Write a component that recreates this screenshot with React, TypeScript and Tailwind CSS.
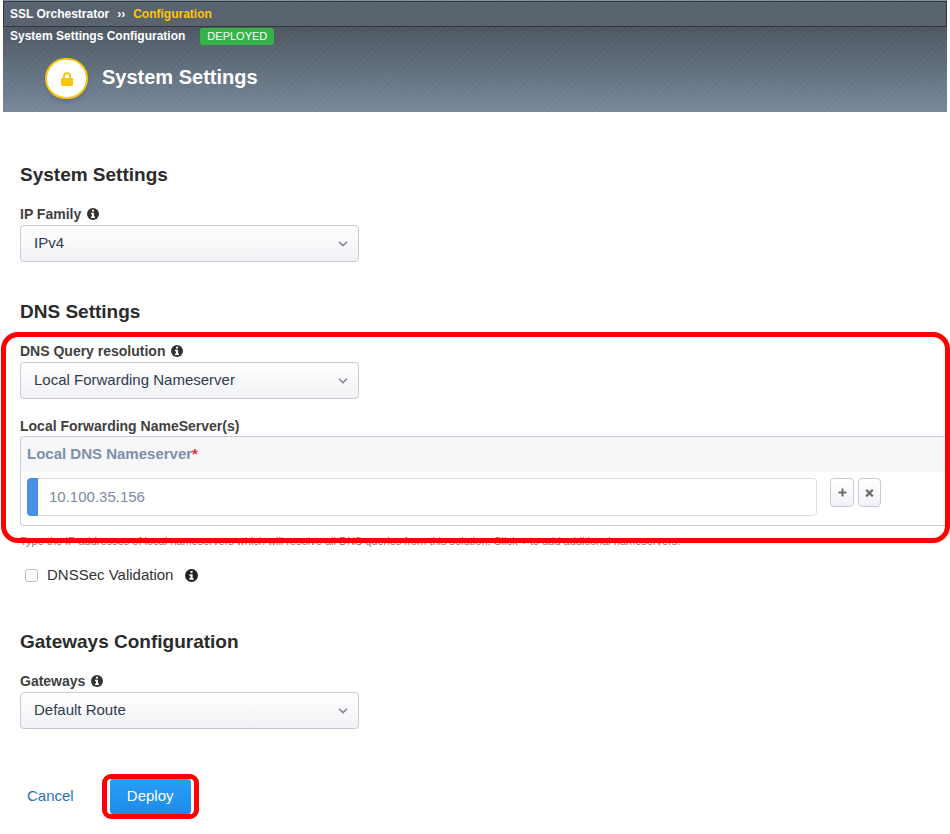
import type { ReactNode } from "react";

function Info({ label, className }: { label: string; className: string }) {
  return (
    <svg viewBox="0 0 24 24" role="img" aria-label={label} className={className}>
      <circle cx="12" cy="12" r="12" fill="currentColor" />
      <path d="M10 3.5h4v3.5h-4zM8 9.5h6v7.5h2v3H8v-3h2v-4.500H8z" fill="#fff" />
    </svg>
  );
}

function Heading({ children }: { children: ReactNode }) {
  return <h2 className="text-[19px] leading-6 font-bold text-[#2b2b2b]">{children}</h2>;
}

function SelectField({ id, label, options }: { id: string; label: string; options: string[] }) {
  return (
    <div>
      <div className="flex h-5 items-center gap-[6px]">
        <label htmlFor={id} className="text-[14px] leading-5 font-bold text-[#3f3f3f]">
          {label}
        </label>
        <Info label={"About " + label} className="size-3 text-[#333]" />
      </div>
      <div className="relative mt-px w-[339px] max-w-full">
        <select
          id={id}
          className="block h-[37px] w-full appearance-none rounded border border-[#c9cad9] bg-linear-to-b from-white to-[#f1f2f5] pr-8 pl-[13px] text-[15px] text-[#2f3b50]"
        >
          {options.map((option) => (
            <option key={option}>{option}</option>
          ))}
        </select>
        <svg
          viewBox="0 0 10 6"
          aria-hidden="true"
          className="pointer-events-none absolute top-4 right-[11px] h-[6px] w-[10px]"
        >
          <path d="M1 0.8 L5 4.6 L9 0.8" fill="none" stroke="#828794" strokeWidth="1.5" />
        </svg>
      </div>
    </div>
  );
}

function Header() {
  return (
    <header className="mx-[3px] h-28 border-t border-[#7c90a3] bg-linear-to-b from-[#4a545e] from-20% to-[#77889b] text-white">
      <div className="h-full bg-[repeating-linear-gradient(135deg,#ffffff07_0px,#ffffff07_2px,transparent_2px,transparent_4px)]">
        <nav
          aria-label="Breadcrumb"
          className="flex h-[26px] items-center gap-2 border border-[#34383a] bg-[#5b6773]/80 px-[6px] text-[12px] font-bold"
        >
          <a href="#orchestrator">SSL Orchestrator</a>
          <span>››</span>
          <a href="#configuration" className="text-[#ffc60a]">
            Configuration
          </a>
        </nav>
        <div className="flex h-[18px] items-center gap-[15px] px-[7px]">
          <span className="text-[12px] leading-4 font-bold">System Settings Configuration</span>
          <span className="rounded-[3px] bg-[#36b24a] px-[7px] text-[11px] leading-[17px]">DEPLOYED</span>
        </div>
        <div className="mt-[13px] flex items-center gap-[14px] pl-[42px]">
          <span className="flex h-[41px] w-[43px] items-center justify-center rounded-full border-2 border-[#fbc50c] bg-white shadow-md">
            <svg viewBox="0 0 12 14" aria-hidden="true" className="h-[14px] w-3">
              <path d="M3 7V4.200a3 3 0 0 1 6 0V7" fill="none" stroke="#fbc50c" strokeWidth="2" />
              <rect y="6" width="12" height="8" rx="1" fill="#fbc50c" />
            </svg>
          </span>
          <h1 className="pb-1 text-[20px] leading-6 font-bold">System Settings</h1>
        </div>
      </div>
    </header>
  );
}

const smallButton =
  "flex h-[29px] items-center justify-center rounded border border-[#c9cad9] bg-linear-to-b from-white to-[#f1f2f5] text-[#6b6b6b]";

function NameserverTable() {
  return (
    <div className="mr-1 rounded-l border border-r-0 border-[#c9cad9] pb-[3px]">
      <table className="w-full table-fixed border-separate border-spacing-0">
        <colgroup>
          <col />
          <col className="w-[122px]" />
        </colgroup>
        <thead>
          <tr className="h-[35px]">
            <th className="rounded bg-[#f6f7f9] px-[6px] text-left text-[15px] font-bold text-[#7d8fa9]">
              Local DNS Nameserver<span className="text-[#f0262b]">*</span>
            </th>
            <th aria-label="Actions" className="rounded bg-[#f6f7f9]" />
          </tr>
        </thead>
        <tbody>
          <tr>
            <td className="py-[6px] pr-[7px] pl-[6px]">
              <div className="flex h-[38px] overflow-hidden rounded">
                <span className="w-[11px] shrink-0 bg-[#4a90e2]" />
                <input
                  aria-label="Local DNS Nameserver"
                  defaultValue="10.100.35.156"
                  className="min-w-0 flex-1 rounded-r border border-l-0 border-[#dcdde8] bg-white px-[11px] text-[15px] text-[#7b8aa1]"
                />
              </div>
            </td>
            <td className="py-[6px] pl-[6px] align-top">
              <div className="flex gap-1">
                <button type="button" aria-label="Add nameserver" className={smallButton + " w-6"}>
                  <svg viewBox="0 0 9 9" className="size-[9px]">
                    <path d="M4.5 0.5V8.5M0.5 4.5H8.5" stroke="currentColor" strokeWidth="2" />
                  </svg>
                </button>
                <button type="button" aria-label="Remove nameserver" className={smallButton + " w-[23px]"}>
                  <svg viewBox="0 0 9 9" className="size-[9px]">
                    <path d="M1.200 1.800L7.800 8.400M7.800 1.800L1.200 8.400" stroke="currentColor" strokeWidth="2.2" />
                  </svg>
                </button>
              </div>
            </td>
          </tr>
        </tbody>
      </table>
    </div>
  );
}

export default function App() {
  return (
    <div className="min-h-screen bg-white font-['Liberation_Sans',Arial,sans-serif]">
      <Header />
      <form className="pt-[51px] pb-[15px] pl-5" onSubmit={(e) => e.preventDefault()}>
        <section className="flex flex-col gap-[17px]">
          <Heading>System Settings</Heading>
          <SelectField id="ip-family" label="IP Family" options={["IPv4"]} />
        </section>

        <section className="mt-[38px]">
          <Heading>DNS Settings</Heading>
          <div className="relative pt-[17px]">
            <SelectField id="dns-query" label="DNS Query resolution" options={["Local Forwarding Nameserver"]} />
            <h3 className="mt-[17px] text-[14px] leading-5 font-bold text-[#3f3f3f]">
              Local Forwarding NameServer(s)
            </h3>
            <NameserverTable />
            <p className="mt-[7px] text-[11px] leading-4 text-[#7c7c7c]">
              Type the IP addresses of local nameservers which will resolve all DNS queries from this solution. Click +
              to add additional nameservers.
            </p>
            <div className="pointer-events-none absolute top-[8px] right-0 bottom-[6px] -left-[19px] rounded-[17px] border-[5px] border-[#ff0000]" />
          </div>
          <div className="mt-4 flex h-5 items-center pl-[5px]">
            <input
              id="dnssec"
              type="checkbox"
              className="size-[13px] appearance-none rounded-[3px] border border-[#bdbdbd] bg-white"
            />
            <label htmlFor="dnssec" className="pl-[9px] text-[15px] leading-5 text-[#333]">
              DNSSec Validation
            </label>
            <Info label="About DNSSec Validation" className="ml-3 size-[13px] text-[#222]" />
          </div>
        </section>

        <section className="mt-[45px] flex flex-col gap-[17px]">
          <Heading>Gateways Configuration</Heading>
          <SelectField id="gateways" label="Gateways" options={["Default Route"]} />
        </section>

        <div className="mt-[45px] flex items-center gap-7 pl-[7px]">
          <a href="#cancel" className="text-[15px] text-[#2a72b8]">
            Cancel
          </a>
          <div className="rounded-[9px] border-[5px] border-[#ff0000] px-[3px]">
            <button
              type="submit"
              className="block h-[35px] w-[81px] rounded-[3px] bg-linear-to-b from-[#2b9df6] to-[#1b8de9] text-[15px] text-white"
            >
              Deploy
            </button>
          </div>
        </div>
      </form>
    </div>
  );
}
